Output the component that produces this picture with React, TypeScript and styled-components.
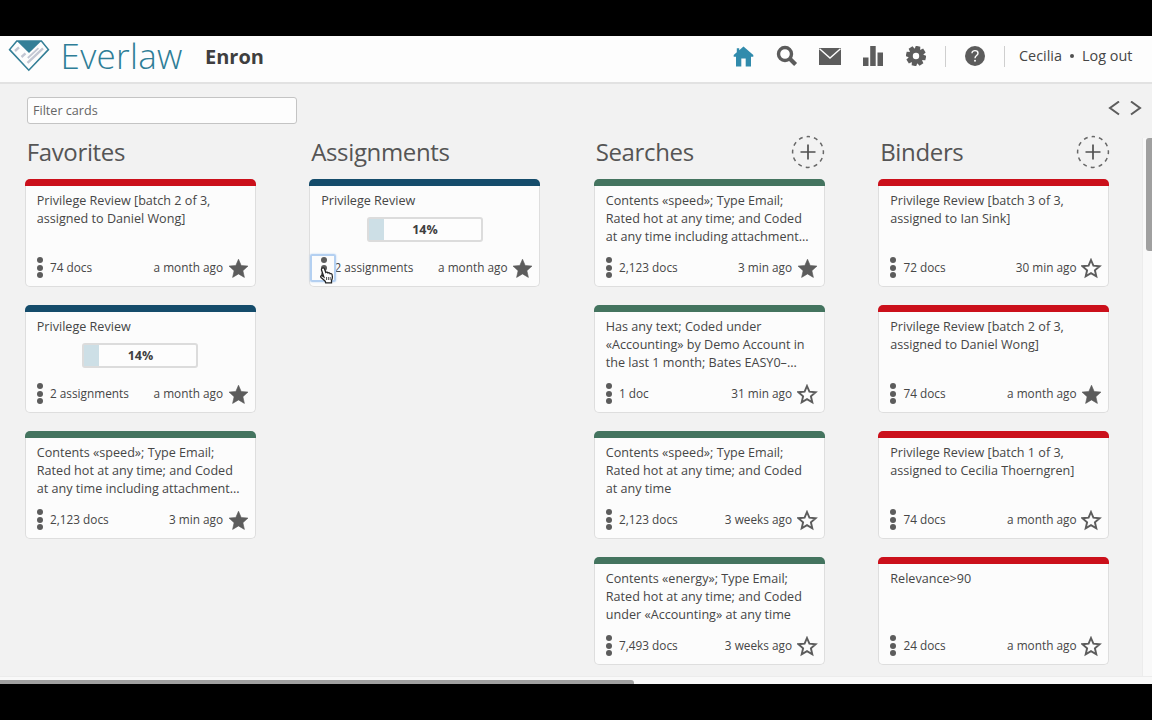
import React from "react";
import styled, { createGlobalStyle } from "styled-components";

const GlobalStyle = createGlobalStyle`
  * { box-sizing: border-box; }
  body { margin: 0; background: #000; font-family: "Open Sans", "Noto Sans", sans-serif; color: #4a4a4a; }
`;

const Screen = styled.div`
  width: 1152px;
  height: 720px;
  padding: 36px 0;
  overflow: hidden;
  background: #000;
`;

const Window = styled.div`
  height: 648px;
  display: flex;
  flex-direction: column;
  background: #f2f2f2;
`;

const Header = styled.header`
  height: 48px;
  flex: none;
  display: flex;
  align-items: flex-start;
  background: #fdfdfd;
  border-bottom: 2px solid #e2e2e2;
`;

const LogoMark = styled.svg`
  flex: none;
  margin: 3px 0 0 8px;
`;

const Wordmark = styled.div`
  width: 122px;
  margin-left: 10.5px;
  font-size: 35px;
  font-weight: 300;
  line-height: 39px;
  letter-spacing: 0.3px;
  color: #2e7d97;
  white-space: nowrap;
`;

const Project = styled.div`
  margin-left: 22.5px;
  font-size: 20px;
  font-weight: 700;
  line-height: 41px;
  color: #3f3f3f;
`;

const Nav = styled.nav`
  margin-left: auto;
  height: 40px;
  display: flex;
  align-items: center;
  padding-right: 20px;
`;

const NavIcon = styled.svg<{ $gap?: number; $color?: string }>`
  flex: none;
  margin-right: ${(p) => p.$gap ?? 19}px;
  color: ${(p) => p.$color ?? "#5c5c5c"};
`;

const Divider = styled.span<{ $gap: number }>`
  width: 1px;
  height: 21px;
  background: #cfcfcf;
  margin-right: ${(p) => p.$gap}px;
`;

const UserLink = styled.span<{ $width: number }>`
  width: ${(p) => p.$width}px;
  font-size: 14.4px;
  line-height: 40px;
  color: #454545;
  white-space: nowrap;
`;

const Bullet = styled.span`
  width: 4px;
  height: 4px;
  margin: 0 8px 0 8px;
  border-radius: 50%;
  background: #505050;
`;

const Toolbar = styled.div`
  height: 54px;
  flex: none;
  display: flex;
  justify-content: space-between;
  padding: 13px 10px 0 27px;
`;

const Filter = styled.input`
  width: 270px;
  height: 27px;
  padding: 0 5px;
  border: 1px solid #c4c4c4;
  border-radius: 3px;
  background: #fdfdfd;
  font: 12.6px "Open Sans", sans-serif;
  outline: none;
  &::placeholder { color: #666; opacity: 1; }
`;

const Pager = styled.div`
  display: flex;
  gap: 10px;
  padding-top: 4px;
`;

const Body = styled.div`
  flex: 1;
  min-height: 0;
  display: flex;
`;

const Board = styled.main`
  flex: 1;
  display: grid;
  grid-template-columns: repeat(4, 231px);
  column-gap: 53.5px;
  padding-left: 24.5px;
`;

const Column = styled.section`
  display: flex;
  flex-direction: column;
  gap: 18px;
`;

const ColumnHead = styled.div`
  height: 23px;
  display: flex;
  justify-content: space-between;
  align-items: flex-start;
`;

const ColumnTitle = styled.h2`
  margin: -4px 0 0 2.2px;
  font-size: 24px;
  font-weight: 400;
  line-height: 36px;
  letter-spacing: -0.35px;
  color: #555;
`;

const AddButton = styled.svg`
  flex: none;
  margin: -3px -0.5px 0 0;
`;

const CardBox = styled.article`
  height: 108px;
  display: flex;
  flex-direction: column;
`;

const CardBar = styled.div<{ $color: string }>`
  height: 7px;
  flex: none;
  border-radius: 5px 5px 0 0;
  background: ${(p) => p.$color};
`;

const CardBody = styled.div`
  flex: 1;
  display: flex;
  flex-direction: column;
  border: 1px solid #dedede;
  border-top: 0;
  border-radius: 0 0 5px 5px;
  background: #fcfcfc;
`;

const CardText = styled.div`
  height: 67px;
  padding: 6px 0 0 11.3px;
  font-size: 12.6px;
  line-height: 18px;
  color: #464646;
  white-space: pre;
`;

const Progress = styled.div`
  width: 116px;
  height: 25px;
  margin: 7px 0 0 45.7px;
  display: flex;
  border: 2px solid #dcdcdc;
  border-radius: 3px;
  background: #fdfdfd;
`;

const ProgressFill = styled.div`
  width: 15px;
  background: #cddfe6;
`;

const ProgressLabel = styled.div`
  flex: 1;
  padding-right: 15px;
  text-align: center;
  font-size: 12.5px;
  font-weight: 700;
  line-height: 21px;
  color: #3f3f3f;
`;

const CardFoot = styled.div`
  height: 30px;
  display: flex;
  align-items: center;
  padding: 0 6px 0 0;
  font-size: 11.8px;
  line-height: 18px;
  color: #464646;
  white-space: nowrap;
`;

const Menu = styled.span<{ $focused?: boolean }>`
  position: relative;
  width: 26px;
  height: 28px;
  flex: none;
  display: flex;
  flex-direction: column;
  align-items: center;
  justify-content: center;
  gap: 1.4px;
  margin-right: -1.5px;
  margin-top: -1px;
  padding-left: 2px;
  border-radius: 2px;
  box-shadow: ${(p) => (p.$focused ? "inset 0 0 0 2px #b4d0f1, 0 0 2px #b4d0f1" : "none")};
`;

const Dot = styled.i`
  width: 6px;
  height: 6px;
  border-radius: 50%;
  background: #5c5c5c;
`;

const Pointer = styled.svg`
  position: absolute;
  left: 10px;
  top: 13px;
  z-index: 2;
`;

const Count = styled.span`
  margin-top: -2px;
`;

const When = styled.span`
  margin: -2px 4.5px 0 auto;
`;

const ScrollY = styled.div`
  width: 10px;
  display: flex;
  justify-content: flex-end;
  background: #f9f9f9;
  border-left: 1px solid #ececec;
`;

const ThumbY = styled.div`
  width: 6px;
  height: 113px;
  border-radius: 3px 0 0 3px;
  background: #a0a0a0;
`;

const ScrollX = styled.div`
  height: 8px;
  flex: none;
  display: flex;
  align-items: flex-end;
  background: #f9f9f9;
  border-top: 1px solid #ececec;
`;

const ThumbX = styled.div`
  width: 634px;
  height: 4px;
  border-radius: 0 3px 0 0;
  background: #a0a0a0;
`;

const STAR = "M10.5 1.2 13.2 7.5 20 8.1 14.9 12.7 16.4 19.4 10.5 15.9 4.6 19.4 6.1 12.7 1 8.1 7.8 7.5Z";
const STAR_OUTLINE = "M10 2 12.4 7.7 18.6 8.2 13.9 12.3 15.3 18.4 10 15.2 4.7 18.4 6.1 12.3 1.4 8.2 7.6 7.7Z";

function Star({ filled }: { filled: boolean }) {
  return (
    <svg width="21" height="21" viewBox="0 0 21 21">
      {filled ? (
        <path d={STAR} fill="#5c5c5c" stroke="#5c5c5c" strokeWidth="0.6" />
      ) : (
        <path d={STAR_OUTLINE} fill="none" stroke="#5c5c5c" strokeWidth="1.9" />
      )}
    </svg>
  );
}

function Hand() {
  return (
    <Pointer width="14" height="17" viewBox="0 0 14 17">
      <path
        d="M2.1 1.2C3.1.5 4.2 1 4.6 2.2L5.8 5.4C6.7 4.8 7.7 5.2 8 6 8.8 5.4 9.9 5.8 10.1 6.7 11.2 6.3 12 7 12.2 8.2 12.7 10.8 12.4 12 11.5 13.3L11.5 15.8H5.7L5.2 14.2C3.8 12.8 2.5 11.6 1 10.4.2 9.5 1.2 8.2 2.5 8.9L3.8 9.8 1.6 3.2C1.3 2.3 1.4 1.6 2.1 1.2Z"
        fill="#fff"
        stroke="#252525"
        strokeWidth="1.3"
      />
      <path d="M6.5 10v3M8.4 10v3M10.2 10v3" stroke="#333" strokeWidth=".8" />
    </Pointer>
  );
}

const RED = "#cb101b";
const BLUE = "#154c6b";
const GREEN = "#44745f";

type CardData = {
  color: string;
  text: string;
  count: string;
  when: string;
  starred?: boolean;
  progress?: string;
  focused?: boolean;
};

function Card(c: CardData) {
  return (
    <CardBox>
      <CardBar $color={c.color} />
      <CardBody>
        <CardText>
          {c.text}
          {c.progress && (
            <Progress>
              <ProgressFill />
              <ProgressLabel>{c.progress}</ProgressLabel>
            </Progress>
          )}
        </CardText>
        <CardFoot>
          <Menu $focused={c.focused}>
            <Dot />
            <Dot />
            <Dot />
            {c.focused && <Hand />}
          </Menu>
          <Count>{c.count}</Count>
          <When>{c.when}</When>
          <Star filled={!!c.starred} />
        </CardFoot>
      </CardBody>
    </CardBox>
  );
}

const speedText = "Contents «speed»; Type Email;\nRated hot at any time; and Coded\nat any time including attachment...";

const columns: { title: string; add?: boolean; cards: CardData[] }[] = [
  {
    title: "Favorites",
    cards: [
      { color: RED, text: "Privilege Review [batch 2 of 3,\nassigned to Daniel Wong]", count: "74 docs", when: "a month ago", starred: true },
      { color: BLUE, text: "Privilege Review", progress: "14%", count: "2 assignments", when: "a month ago", starred: true },
      { color: GREEN, text: speedText, count: "2,123 docs", when: "3 min ago", starred: true },
    ],
  },
  {
    title: "Assignments",
    cards: [
      { color: BLUE, text: "Privilege Review", progress: "14%", count: "2 assignments", when: "a month ago", starred: true, focused: true },
    ],
  },
  {
    title: "Searches",
    add: true,
    cards: [
      { color: GREEN, text: speedText, count: "2,123 docs", when: "3 min ago", starred: true },
      { color: GREEN, text: "Has any text; Coded under\n«Accounting» by Demo Account in\nthe last 1 month; Bates EASY0–...", count: "1 doc", when: "31 min ago" },
      { color: GREEN, text: "Contents «speed»; Type Email;\nRated hot at any time; and Coded\nat any time", count: "2,123 docs", when: "3 weeks ago" },
      { color: GREEN, text: "Contents «energy»; Type Email;\nRated hot at any time; and Coded\nunder «Accounting» at any time", count: "7,493 docs", when: "3 weeks ago" },
    ],
  },
  {
    title: "Binders",
    add: true,
    cards: [
      { color: RED, text: "Privilege Review [batch 3 of 3,\nassigned to Ian Sink]", count: "72 docs", when: "30 min ago" },
      { color: RED, text: "Privilege Review [batch 2 of 3,\nassigned to Daniel Wong]", count: "74 docs", when: "a month ago", starred: true },
      { color: RED, text: "Privilege Review [batch 1 of 3,\nassigned to Cecilia Thoerngren]", count: "74 docs", when: "a month ago" },
      { color: RED, text: "Relevance>90", count: "24 docs", when: "a month ago" },
    ],
  },
];

export default function App() {
  return (
    <Screen>
      <GlobalStyle />
      <Window>
        <Header>
          <LogoMark width="42" height="34" viewBox="0 0 42 34">
            <path d="M8.8 2H33.4L40.4 10.6 20.8 31.2 1.6 10.6Z" fill="#fdfdfd" stroke="#347f97" strokeWidth="1.6" />
            <path d="M8.8 2H33.4L21 14Z" fill="#347f97" />
            <g stroke="#c3c7d3" strokeWidth="2.4" fill="none">
              <path d="M7 12 11 8.4M13.5 18 17.5 14.4M19.5 23.8 35 9.4" />
              <path d="M19.8 19 30.5 9.2" strokeWidth="1.8" />
            </g>
          </LogoMark>
          <Wordmark>Everlaw</Wordmark>
          <Project>Enron</Project>
          <Nav>
            <NavIcon width="21" height="21" viewBox="0 0 21 21" $gap={22} $color="#318bac">
              <path d="M10.5.5 20.3 9v1.7H18V20.5H12.7V12.5H8.3V20.5H3V10.7H.7V9L3.8 6.3V2.2H6.2V4.2Z" fill="currentColor" />
            </NavIcon>
            <NavIcon width="22" height="22" viewBox="0 0 22 22" $gap={21}>
              <circle cx="9" cy="9" r="6.5" fill="none" stroke="currentColor" strokeWidth="3.4" />
              <path d="m13.8 13.8 5.8 5.8" stroke="currentColor" strokeWidth="4.2" />
            </NavIcon>
            <NavIcon width="22" height="17" viewBox="0 0 22 17" $gap={22}>
              <path d="M0 0H22V17H0Z" fill="currentColor" />
              <path d="M.5.8 11 10 21.5.8" fill="none" stroke="#fdfdfd" strokeWidth="1.4" />
            </NavIcon>
            <NavIcon width="20" height="20" viewBox="0 0 20 20" $gap={23}>
              <path d="M0 11.5H5.5V20H0ZM7.2 0H12.7V20H7.2ZM14.5 6.5H20V20H14.5Z" fill="currentColor" />
            </NavIcon>
            <NavIcon width="20" height="20" viewBox="-10 -10 20 20" $gap={19}>
              <g fill="currentColor">
                {[0, 45, 90, 135, 180, 225, 270, 315].map((a) => (
                  <path key={a} d="M-3-5.5-2.3-10H2.3L3-5.5Z" transform={`rotate(${a + 12})`} />
                ))}
              </g>
              <circle r="5.4" fill="none" stroke="currentColor" strokeWidth="4.4" />
            </NavIcon>
            <Divider $gap={19} />
            <NavIcon width="20" height="20" viewBox="0 0 20 20" $gap={19}>
              <circle cx="10" cy="10" r="10" fill="currentColor" />
              <path d="M7 7.2C7 3.7 13 3.9 13 7.2 13 9.5 10 9.5 10 12.2" fill="none" stroke="#fdfdfd" strokeWidth="1.4" />
              <circle cx="10" cy="14.8" r="1" fill="#fdfdfd" />
            </NavIcon>
            <Divider $gap={14} />
            <UserLink $width={43}>Cecilia</UserLink>
            <Bullet />
            <UserLink $width={50}>Log out</UserLink>
          </Nav>
        </Header>
        <Toolbar>
          <Filter placeholder="Filter cards" />
          <Pager>
            <svg width="12" height="15" viewBox="0 0 12 15">
              <path d="M11 0.5 2 7 11 13.5" fill="none" stroke="#5c5c5c" strokeWidth="2" />
            </svg>
            <svg width="12" height="15" viewBox="0 0 12 15">
              <path d="m1 .5 9 6.5L1 13.5" fill="none" stroke="#5c5c5c" strokeWidth="2" />
            </svg>
          </Pager>
        </Toolbar>
        <Body>
          <Board>
            {columns.map((col) => (
              <Column key={col.title}>
                <ColumnHead>
                  <ColumnTitle>{col.title}</ColumnTitle>
                  {col.add && (
                    <AddButton width="34" height="34" viewBox="0 0 34 34">
                      <circle cx="17" cy="17" r="15.4" fill="none" stroke="#686868" strokeWidth="1.5" strokeDasharray="4 4.063" strokeDashoffset="2" transform="rotate(-90 17 17)" />
                      <path d="M9.5 17H24.5M17 9.5V24.5" stroke="#505050" strokeWidth="1.7" />
                    </AddButton>
                  )}
                </ColumnHead>
                {col.cards.map((card, i) => (
                  <Card key={i} {...card} />
                ))}
              </Column>
            ))}
          </Board>
          <ScrollY>
            <ThumbY />
          </ScrollY>
        </Body>
        <ScrollX>
          <ThumbX />
        </ScrollX>
      </Window>
    </Screen>
  );
}
